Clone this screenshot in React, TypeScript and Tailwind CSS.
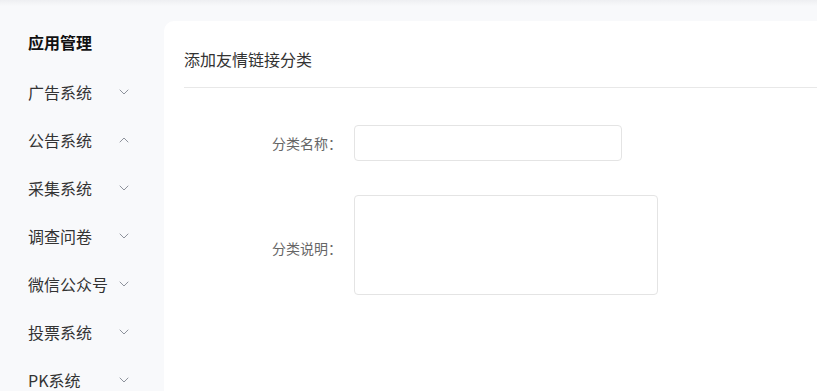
import { ChevronDown, ChevronUp } from "lucide-react";

const menus = [
  { name: "广告系统", open: false },
  { name: "公告系统", open: true },
  { name: "采集系统", open: false },
  { name: "调查问卷", open: false },
  { name: "微信公众号", open: false },
  { name: "投票系统", open: false },
  { name: "PK系统", open: false },
];

const Sidebar = () => (
  <aside className="w-[164px] shrink-0 pl-[28px] pr-[32px] pt-[30px]">
    <div className="text-[16px] font-bold leading-[24px] text-[#111]">应用管理</div>
    <ul className="mt-[14px]">
      {menus.map((m) => (
        <li key={m.name} className="flex h-[48px] items-center justify-between text-[16px] text-[#333]">
          <span>{m.name}</span>
          {m.open ? (
            <ChevronUp size={16} strokeWidth={1.3} className="text-[#7d828c]" />
          ) : (
            <ChevronDown size={16} strokeWidth={1.3} className="text-[#7d828c]" />
          )}
        </li>
      ))}
    </ul>
  </aside>
);

export default function App() {
  return (
    <div
      className="relative h-[391px] w-[817px] overflow-hidden bg-[#f8f9fb]"
      style={{ fontFamily: '"Noto Sans CJK SC", "Noto Sans", sans-serif' }}
    >
      <div className="absolute left-0 right-0 top-0 h-[6px] bg-gradient-to-b from-[#eeeff2] to-[#f8f9fb]" />
      <div className="flex h-full">
        <Sidebar />
        <main className="mt-[21px] flex-1 rounded-tl-[10px] bg-white pl-[20px]">
          <div className="h-[67px] border-b border-[#e8e8e8] pt-[26px] text-[16px] leading-[24px] text-[#333]">
            添加友情链接分类
          </div>
          <form className="pt-[37px]">
            <div className="flex items-center">
              <label className="w-[170px] pr-[12px] text-right text-[14px] text-[#666]">分类名称：</label>
              <input className="h-[36px] w-[268px] rounded-[4px] border border-[#e4e4e4] outline-none" />
            </div>
            <div className="mt-[34px] flex items-center">
              <label className="w-[170px] pr-[12px] pt-[6px] text-right text-[14px] text-[#666]">分类说明：</label>
              <textarea className="h-[100px] w-[304px] resize-none rounded-[4px] border border-[#e4e4e4] outline-none" />
            </div>
          </form>
        </main>
      </div>
    </div>
  );
}
